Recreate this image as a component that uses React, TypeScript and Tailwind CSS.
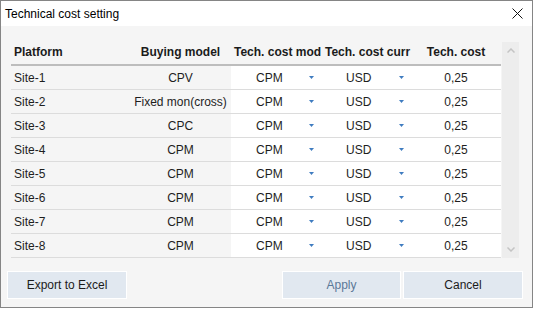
import React from "react";

const rows = [
  ["Site-1", "CPV"],
  ["Site-2", "Fixed mon(cross)"],
  ["Site-3", "CPC"],
  ["Site-4", "CPM"],
  ["Site-5", "CPM"],
  ["Site-6", "CPM"],
  ["Site-7", "CPM"],
  ["Site-8", "CPM"],
];

function Arrow() {
  return (
    <svg width="5" height="3" viewBox="0 0 5 3" className="block">
      <polygon points="0,0 5,0 2.5,3" fill="#3f7cc0" />
    </svg>
  );
}

export default function App() {
  return (
    <div className="w-[534px] h-[309px] bg-white" style={{ fontFamily: '"Liberation Sans", Arial, sans-serif' }}>
      <div className="w-[533px] h-[308px] border border-[#858585] flex flex-col">
        <div className="h-[25px] bg-white flex items-center justify-between pl-[4px] pr-[9px] shrink-0">
          <span className="text-[12px] text-black leading-none">Technical cost setting</span>
          <svg width="11" height="11" viewBox="0 0 11 11">
            <path d="M0.5 0.5 L10.5 10.5 M10.5 0.5 L0.5 10.5" stroke="#111" strokeWidth="1" />
          </svg>
        </div>
        <div className="flex-1 bg-[#f5f5f5] flex flex-col">
          <div className="flex pl-[10px] pt-[14px]">
            <div className="w-[490px] flex flex-col">
              <div className="h-[24px] flex items-center text-[12px] font-bold text-[#1b1b1b] whitespace-nowrap">
                <div className="w-[119px] pl-[3px]">Platform</div>
                <div className="w-[101px] text-center">Buying model</div>
                <div className="w-[90px] pl-[3px] overflow-hidden">Tech. cost mod</div>
                <div className="w-[90px] pl-[4px] overflow-hidden">Tech. cost curr</div>
                <div className="w-[90px] text-center">Tech. cost</div>
              </div>
              <div className="h-[2px] bg-[#bdbdbd]" />
              {rows.map(([p, b]) => (
                <div key={p} className="h-[24px] flex text-[12px] text-[#1e1e1e] border-b border-[#dcdcdc] whitespace-nowrap">
                  <div className="w-[119px] pl-[3px] flex items-center">{p}</div>
                  <div className="w-[101px] flex items-center justify-center">{b}</div>
                  <div className="w-[90px] bg-white flex items-center pl-[25px] pr-[7px]">
                    <span>CPM</span>
                    <span className="flex-1" />
                    <Arrow />
                  </div>
                  <div className="w-[90px] bg-white flex items-center pl-[25px] pr-[7px]">
                    <span>USD</span>
                    <span className="flex-1" />
                    <Arrow />
                  </div>
                  <div className="w-[90px] bg-white flex items-center justify-center">0,25</div>
                </div>
              ))}
            </div>
            <div className="ml-[1px] mt-[2px] w-[17px] h-[216px] bg-[#ededed] flex flex-col items-center justify-between py-[6px]">
              <svg width="8" height="5" viewBox="0 0 8 5">
                <path d="M0.5 4.5 L4 1 L7.5 4.5" stroke="#c4c4c4" strokeWidth="1.5" fill="none" />
              </svg>
              <svg width="8" height="5" viewBox="0 0 8 5">
                <path d="M0.5 0.5 L4 4 L7.5 0.5" stroke="#c4c4c4" strokeWidth="1.5" fill="none" />
              </svg>
            </div>
          </div>
          <div className="flex mt-[13px] pl-[6px] text-[12px]">
            <button className="w-[120px] h-[28px] bg-[#e1e8f0] border border-white text-[#1b1b1b]">Export to Excel</button>
            <span className="flex-1" />
            <button className="w-[119px] h-[28px] bg-[#e1e8f0] border border-white text-[#5b7898]">Apply</button>
            <button className="ml-[2px] mr-[9px] w-[120px] h-[28px] bg-[#e1e8f0] border border-white text-[#1b1b1b]">Cancel</button>
          </div>
        </div>
      </div>
    </div>
  );
}
